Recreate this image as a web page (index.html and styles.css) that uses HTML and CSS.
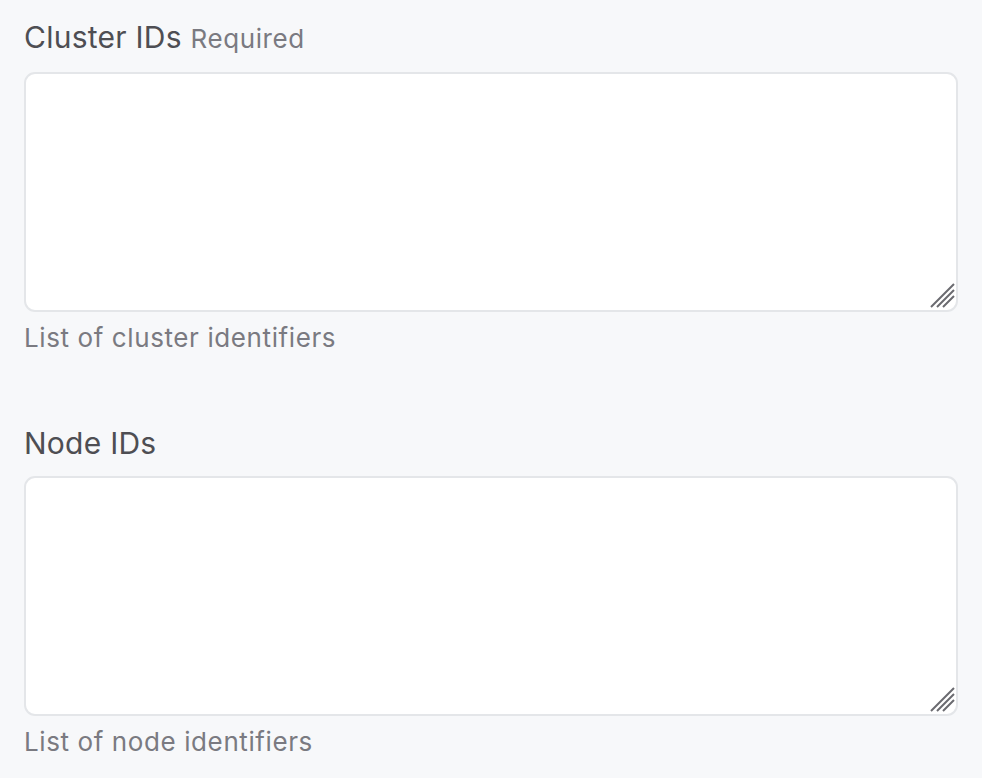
FILE: index.html
```html
<!DOCTYPE html>
<html>
<head>
<meta charset="utf-8">
<link rel="stylesheet" href="styles.css">
</head>
<body>
<form class="form">
  <div class="field">
    <label class="label" for="cluster">Cluster IDs <span class="req">Required</span></label>
    <div class="area-wrap">
      <textarea id="cluster" class="area"></textarea>
      <svg class="grip" width="26" height="26" viewBox="0 0 26 26"><path d="M2 25 L25 2 M8 25 L25 8 M14 25 L25 14" stroke="#6b6b70" stroke-width="2" fill="none"/></svg>
    </div>
    <div class="help">List of cluster identifiers</div>
  </div>
  <div class="field">
    <label class="label" for="node">Node IDs</label>
    <div class="area-wrap">
      <textarea id="node" class="area"></textarea>
      <svg class="grip" width="26" height="26" viewBox="0 0 26 26"><path d="M2 25 L25 2 M8 25 L25 8 M14 25 L25 14" stroke="#6b6b70" stroke-width="2" fill="none"/></svg>
    </div>
    <div class="help">List of node identifiers</div>
  </div>
</form>
</body>
</html>
```

FILE: styles.css
```css
html, body {
  margin: 0;
  padding: 0;
  background: #f7f8fa;
}
body {
  font-family: Inter, "Noto Sans", "Liberation Sans", sans-serif;
}
.form {
  padding: 19px 24px 0 24px;
  display: flex;
  flex-direction: column;
  gap: 71px;
}
.field {
  display: flex;
  flex-direction: column;
}
.label {
  font-size: 30px;
  line-height: 36px;
  color: #4e4e53;
  letter-spacing: 0.25px;
  margin-bottom: 15px;
}
.req {
  font-size: 26px;
  color: #7a7a81;
  letter-spacing: 0.6px;
}
.area-wrap {
  position: relative;
  width: 934px;
  height: 240px;
}
.area {
  display: block;
  box-sizing: border-box;
  width: 100%;
  height: 100%;
  margin: 0;
  border: 2px solid #e4e6e9;
  border-radius: 11px;
  background: #ffffff;
  resize: none;
  outline: none;
}
.grip {
  position: absolute;
  right: 3px;
  bottom: 4px;
}
.help {
  margin-top: 10px;
  font-size: 26px;
  line-height: 32px;
  color: #7a7a81;
  letter-spacing: 0.6px;
}
```
